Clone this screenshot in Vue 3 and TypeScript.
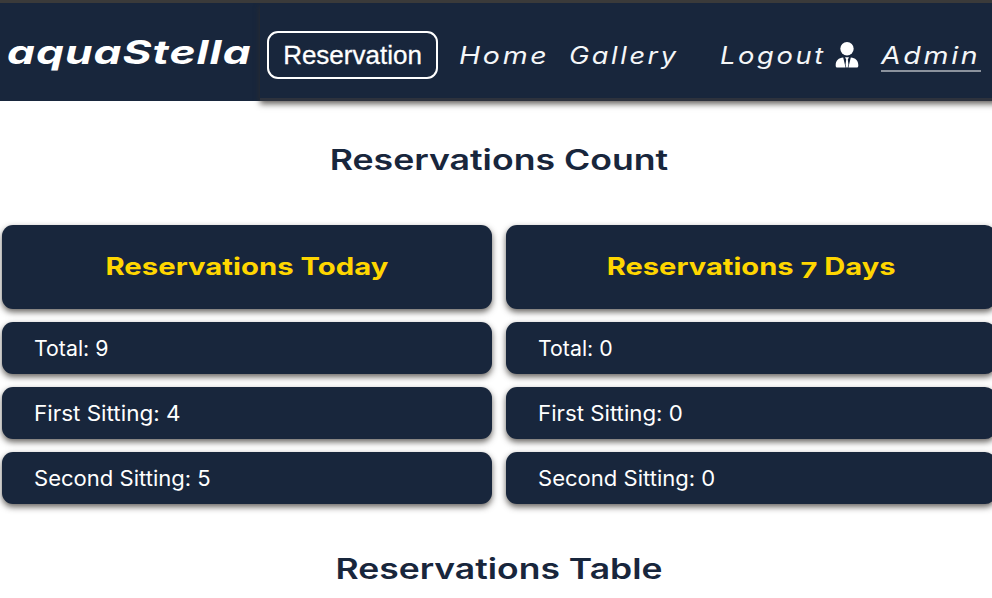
<script setup lang="ts">
interface Row { label: string; value: number; fit: number }
interface Column { key: string; title: string[]; fit: number; rows: Row[] }

const columns: Column[] = [
  {
    key: 'today',
    title: ['Reservations Today'],
    fit: 1.22,
    rows: [
      { label: 'Total', value: 9, fit: 1.015 },
      { label: 'First Sitting', value: 4, fit: 1.07 },
      { label: 'Second Sitting', value: 5, fit: 1.05 },
    ],
  },
  {
    key: 'week',
    title: ['Reservations', '7', 'Days'],
    fit: 1.212,
    rows: [
      { label: 'Total', value: 0, fit: 1.015 },
      { label: 'First Sitting', value: 0, fit: 1.06 },
      { label: 'Second Sitting', value: 0, fit: 1.05 },
    ],
  },
]
</script>

<template>
  <div class="page">
    <header class="header">
      <a class="brand"><span class="stretch">aquaStella</span></a>
      <nav class="nav">
        <a class="reserve">Reservation</a>
        <a class="link home"><span class="stretch">Home</span></a>
        <a class="link gallery"><span class="stretch">Gallery</span></a>
        <a class="link logout"><span class="stretch">Logout</span></a>
        <svg class="user" viewBox="0 0 24 26" width="24" height="26">
          <circle cx="12" cy="6.7" r="6.7" fill="#fff" />
          <path d="M8.2 15.6 L10.6 25.5 H2.2 Q.7 25.5 .7 24 V23 C.7 18.8 3.7 15.9 8.2 15.6Z M15.8 15.6 L13.4 25.5 H21.8 Q23.3 25.5 23.3 24 V23 C23.3 18.8 20.3 15.9 15.8 15.6Z" fill="#fff" />
          <path d="M10 15.3 H14 L12.8 17.6 L13.4 22.5 L12.7 25.5 H11.3 L10.6 22.5 L11.2 17.6Z" fill="#fff" />
        </svg>
        <a class="link admin"><span class="stretch">Admin</span></a>
      </nav>
    </header>

    <main>
      <h1 class="heading count"><span>Reservations Count</span></h1>
      <div class="grid">
        <section v-for="col in columns" :key="col.key" class="column">
          <div class="card title">
            <h2 :style="{ transform: `scaleX(${col.fit})` }">
              <template v-for="(part, i) in col.title" :key="part"><template v-if="i > 0">&nbsp;</template><span :class="{ oldstyle: part === '7' }">{{ part }}</span></template>
            </h2>
          </div>
          <div v-for="row in col.rows" :key="row.label" class="card row">
            <span class="stretch" :style="{ transform: `scaleX(${row.fit})` }">{{ row.label }}: {{ row.value }}</span>
          </div>
        </section>
      </div>
      <h1 class="heading table"><span>Reservations Table</span></h1>
    </main>
  </div>
</template>

<style>
body { background: #fff; overflow: hidden; }
</style>

<style scoped>
* { box-sizing: border-box; }
.page { width: 992px; height: 598px; overflow: hidden; font-family: Inter, sans-serif; color: #18263c; }
a { display: block; flex: none; color: #fff; white-space: nowrap; text-decoration: none; }
.stretch { display: inline-block; white-space: nowrap; transform-origin: left center; }
.header { display: flex; height: 101px; background: #18263c; border-top: 3px solid #3a3a3a; }
.brand { width: 260px; padding: 28px 0 0 7px; font: italic 700 33px/42px Inter, sans-serif; letter-spacing: .8px; }
.brand .stretch { transform: scaleX(1.34); }
.nav { display: flex; flex: none; align-items: flex-start; width: 740px; height: 98px; padding: 28px 0 0 7px; border-bottom: 3px solid #2d323d; box-shadow: 0 3px 6px rgba(50, 46, 42, .75); clip-path: inset(0 0 -14px -8px); }
.reserve { width: 171px; height: 48px; border: 2px solid #fff; border-radius: 11px; font: 26px/44px "Liberation Sans", Arial, sans-serif; text-align: center; -webkit-text-stroke: .3px #fff; }
.link { height: 41px; font: italic 400 24px/50px Inter, sans-serif; letter-spacing: 2.3px; color: #f4f6f8; }
.home { width: 88px; margin-left: 21px; }
.gallery { width: 108px; margin-left: 22px; }
.logout { width: 105px; margin-left: 43px; }
.admin { width: 100px; margin-left: 22px; border-bottom: 2px solid #8b929d; }
.home .stretch { transform: scaleX(1.185); }
.gallery .stretch { transform: scaleX(1.13); }
.logout .stretch { transform: scaleX(1.138); }
.admin .stretch { transform: scaleX(1.185); }
.user { flex: none; margin: 11px 0 0 10px; }
.heading { margin: 0; width: 998px; text-align: center; font-size: 28px; font-weight: 600; line-height: 40px; }
.heading span { display: inline-block; transform: scaleX(1.273); }
.count { padding-top: 39px; }
.table { padding-top: 45px; }
.table span { transform: scaleX(1.268); }
.grid { display: grid; grid-template-columns: 490px 490px; gap: 14px; width: 996px; padding: 45px 0 0 2px; }
.column { display: flex; flex-direction: column; gap: 13px; }
.card { display: flex; align-items: center; border-radius: 11px; background: #18263c; box-shadow: 0 3px 6px rgba(50, 46, 42, .75); }
.title { justify-content: center; height: 84.3px; }
.title h2 { margin: 0; font-size: 24px; font-weight: 700; line-height: 30px; color: #ffd600; white-space: nowrap; }
.oldstyle { display: inline-block; transform: translateY(4px) scaleY(.92); }
.row { height: 51.9px; padding: 1px 0 0 32px; font-size: 21px; color: #fff; }
</style>
